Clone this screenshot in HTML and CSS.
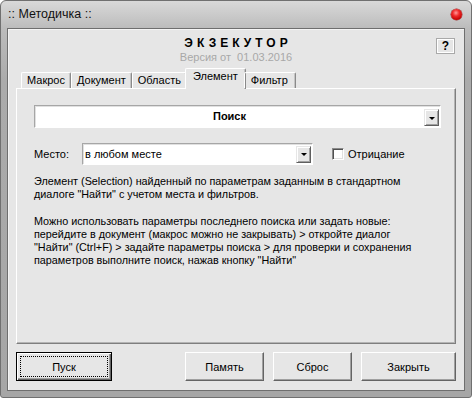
FILE: index.html
```html
<!DOCTYPE html>
<html lang="ru">
<head>
<meta charset="utf-8">
<title>Методичка</title>
<link rel="stylesheet" href="styles.css">
</head>
<body>
<div class="window">
  <div class="titlebar">
    <span class="title">:: Методичка ::</span>
    <span class="close"></span>
  </div>
  <div class="client">
    <div class="header">
      <div class="brand">
        <div class="name">ЭКЗЕКУТОР</div>
        <div class="ver">Версия от&nbsp; 01.03.2016</div>
      </div>
      <div class="help">?</div>
    </div>
    <div class="tabs">
      <div class="tab">Макрос</div>
      <div class="tab">Документ</div>
      <div class="tab">Область</div>
      <div class="tab active">Элемент</div>
      <div class="tab tab-wide">Фильтр</div>
    </div>
    <div class="panel">
      <div class="combo combo-big">
        <span class="combo-text">Поиск</span>
        <span class="arrow-btn"><span class="tri"></span></span>
      </div>
      <div class="place-row">
        <span class="label">Место:</span>
        <div class="combo combo-place">
          <span class="combo-text">в любом месте</span>
          <span class="arrow-btn"><span class="tri"></span></span>
        </div>
        <span class="checkbox"></span>
        <span class="check-label">Отрицание</span>
      </div>
      <p class="desc">Элемент (Selection) найденный по параметрам заданным в стандартном<br>диалоге "Найти" с учетом места и фильтров.</p>
      <p class="desc desc2">Можно использовать параметры последнего поиска или задать новые:<br>перейдите в документ (макрос можно не закрывать) &gt; откройте диалог<br>"Найти" (Ctrl+F) &gt; задайте параметры поиска &gt; для проверки и сохранения<br>параметров выполните поиск, нажав кнопку "Найти"</p>
    </div>
    <div class="buttons">
      <div class="btn btn-default"><span class="focus">Пуск</span></div>
      <div class="btn btn-mem">Память</div>
      <div class="btn btn-reset">Сброс</div>
      <div class="btn btn-close">Закрыть</div>
    </div>
  </div>
</div>
</body>
</html>
```
FILE: styles.css
```css
* { box-sizing: border-box; }
html, body { margin: 0; padding: 0; background: #fff; }
body {
  width: 472px; height: 398px; overflow: hidden;
  font-family: "Liberation Sans", Arial, sans-serif;
  font-size: 11px; color: #000;
}
.window {
  width: 472px; height: 398px;
  border: 1px solid #707070;
  border-radius: 6px 6px 3px 3px;
  background: linear-gradient(#d9d9d9, #bcbcbc 27px, #ababab 80px, #a6a6a6);
  padding: 0 6px 6px;
  display: flex; flex-direction: column;
}
.titlebar {
  height: 27px; flex: none;
  display: flex; align-items: center; justify-content: space-between;
  padding: 0 3px 1px 1px;
}
.title { font-size: 12.5px; color: #111; }
.close {
  width: 11px; height: 11px; border-radius: 50%;
  background: radial-gradient(circle at 45% 35%, #ff9a9a 0, #f02a2a 35%, #c00000 75%, #8c0000 100%);
  box-shadow: 0 0 0 0.5px #9a3030;
}
.client {
  flex: 1;
  border: 1px solid #6e6e6e;
  box-shadow: inset 1px 1px 0 #f4f4f4;
  background: #e6e6e6;
  padding: 0 8px 9px;
  display: flex; flex-direction: column;
}
.header {
  height: 39px; flex: none;
  display: grid; grid-template-columns: 1fr auto 1fr;
}
.brand { grid-column: 2; padding-top: 6px; text-align: center; }
.name {
  font-weight: bold; font-size: 12px; letter-spacing: 4px;
  line-height: 16px; padding-left: 4px; color: #000;
}
.ver { color: #a8a8a8; line-height: 12px; }
.help {
  grid-column: 3; justify-self: end; align-self: start;
  margin-top: 9px; margin-right: 1px;
  width: 19px; height: 16px;
  border: 1px solid #a9a9a9;
  box-shadow: inset 1px 1px 0 #fff, inset -1px -1px 0 #fff;
  font-weight: bold; font-size: 12px; line-height: 14px; text-align: center;
}
.tabs {
  height: 20px; flex: none;
  display: flex; align-items: flex-end;
  padding-left: 5px;
  position: relative; z-index: 1;
}
.tab {
  height: 16px;
  padding: 0 5px;
  border: 1px solid;
  border-color: #fff #8a8a8a transparent #fff;
  border-bottom: none;
  border-radius: 2px 2px 0 0;
  line-height: 14px;
  box-shadow: inset -1px 0 0 #c4c4c4;
  white-space: nowrap;
}
.tab-wide { padding: 0 7px 0 6px; }
.tab.active {
  height: 21px;
  margin: 0 -2px -1px;
  padding: 0 7px;
  background: #e6e6e6;
  line-height: 14px;
}
.panel {
  height: 256px; flex: none;
  border: 1px solid;
  border-color: #fff #7e7e7e #7e7e7e #fff;
  box-shadow: inset -1px -1px 0 #b4b4b4;
  padding: 16px 14px 0 17px;
}
.combo {
  display: flex; align-items: center;
  background: #fff;
  border: 1px solid;
  border-color: #a6a6a6 #fff #fff #a6a6a6;
  box-shadow: inset 1px 1px 0 #e0e0e0;
}
.combo-big { height: 23px; align-items: flex-end; padding: 0 1px 1px 0; }
.combo-big .combo-text {
  flex: 1; align-self: center; text-align: center; font-weight: bold;
}
.arrow-btn {
  width: 15px; height: 17px; flex: none;
  background: #e6e6e6;
  border: 1px solid;
  border-color: #e6e6e6 #5f5f5f #5f5f5f #e6e6e6;
  box-shadow: inset 1px 1px 0 #fff, inset -1px -1px 0 #a0a0a0;
  display: flex; align-items: center; justify-content: center;
}
.tri {
  width: 0; height: 0;
  border-left: 3px solid transparent;
  border-right: 3px solid transparent;
  border-top: 3px solid #000;
  margin-top: 1px;
}
.place-row {
  margin-top: 15px; height: 22px;
  display: flex; align-items: center;
}
.label { width: 48px; flex: none; }
.combo-place { width: 231px; height: 22px; padding-right: 1px; }
.combo-place .combo-text { flex: 1; padding-left: 2px; }
.checkbox {
  width: 12px; height: 12px; margin-left: 19px; flex: none;
  background: #fff;
  border: 1px solid;
  border-color: #8a8a8a #fff #fff #8a8a8a;
  box-shadow: inset 1px 1px 0 #505050, inset -1px -1px 0 #e0e0e0;
}
.check-label { margin-left: 4px; }
.desc { margin: 10px 0 0; font-size: 10.8px; line-height: 12.7px; white-space: nowrap; }
.desc2 { margin-top: 15px; }
.buttons {
  margin-top: 8px; height: 29px; flex: none;
  display: flex; gap: 9px;
}
.btn {
  height: 29px;
  background: #e6e6e6;
  border: 1px solid;
  border-color: #fff #646464 #646464 #fff;
  box-shadow: inset -1px -1px 0 #a0a0a0;
  display: flex; align-items: center; justify-content: center;
}
.btn-default {
  width: 96px;
  border: 1px solid #000;
  box-shadow: inset 1px 1px 0 #fff, inset -1px -1px 0 #646464, inset -2px -2px 0 #a0a0a0;
  padding: 3px;
}
.focus {
  flex: 1; align-self: stretch;
  border: 1px dotted #000;
  display: flex; align-items: center; justify-content: center;
}
.btn-mem { width: 79px; margin-left: auto; }
.btn-reset { width: 79px; }
.btn-close { width: 95px; }
```
